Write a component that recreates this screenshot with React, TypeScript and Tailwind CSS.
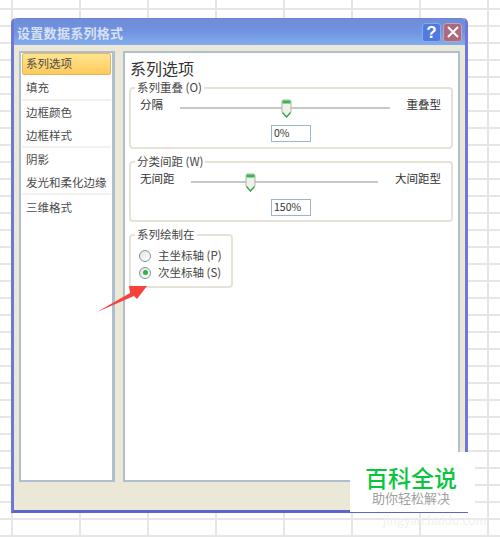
const font = { fontFamily: '"Noto Sans CJK SC", "Liberation Sans", sans-serif' };

const NavItem = ({ label, className }: { label: string; className: string }) => (
  <div className={`mx-px flex items-center whitespace-nowrap text-[11.5px] leading-none text-[#4a4a4a] ${className}`}>
    {label}
  </div>
);

const Thumb = () => (
  <svg width="11" height="20" viewBox="0 0 11 20" className="shrink-0">
    <path d="M1 2.5 L2 1 H9 L10 2.5 V13 L5.5 18.5 L1 13 Z" fill="#f1f1ec" stroke="#a9b5ab" />
    <rect x="1.5" y="1.5" width="8" height="3" fill="#35b84a" />
    <path d="M1.5 13.5 L5.5 18 L9.5 13.5" stroke="#3aa24a" strokeWidth="1.3" fill="none" />
  </svg>
);

const Group = ({ title, children, className }: { title: string; children: React.ReactNode; className: string }) => (
  <div className={`relative rounded-[4px] border-2 border-[#e5e3d5] ${className}`}>
    <span className="absolute left-[4px] top-[-9px] whitespace-nowrap bg-white px-[2px] text-[11.5px] leading-[14px] text-[#444]">{title}</span>
    {children}
  </div>
);

const SliderRow = ({
  left,
  right,
  value,
  trackClass,
  thumbClass,
}: {
  left: string;
  right: string;
  value: string;
  trackClass: string;
  thumbClass: string;
}) => (
  <>
    <div className="flex h-[33px] items-start pl-[9px] pr-[10px] pt-[5px] text-[11.5px] leading-[14px] text-[#333]">
      <span>{left}</span>
      <div className={`relative mt-px flex h-[20px] items-center ${trackClass}`}>
        <div className="h-[2px] w-full bg-[#c8c8c0]" />
        <div className={`absolute top-[1px] ${thumbClass}`}>
          <Thumb />
        </div>
      </div>
      <span className="ml-auto">{right}</span>
    </div>
    <div className="ml-[140px] flex h-[17px] w-[40px] items-center border border-[#9db4cf] bg-white pl-[2px] text-[10.5px] leading-none text-[#333]">
      {value}
    </div>
  </>
);

const Radio = ({ label, checked }: { label: string; checked?: boolean }) => (
  <div className="flex h-[17px] items-center gap-[7px] pl-[8px] text-[11.5px] leading-none text-[#444]">
    <span className="flex h-[12px] w-[12px] items-center justify-center rounded-full border border-[#7d93ab] bg-gradient-to-br from-[#e4e4dc] to-white">
      {checked && <span className="h-[5px] w-[5px] rounded-full bg-[#2fb53f]" />}
    </span>
    {label}
  </div>
);

export default function App() {
  return (
    <div className="relative h-[537px] w-[500px] overflow-hidden bg-white pl-[11px] pt-[18px]" style={font}>
      <div className="absolute inset-0 bg-[linear-gradient(to_right,#e6e6e6_2px,transparent_2px),linear-gradient(to_bottom,#e6e6e6_2px,transparent_2px)] bg-[size:68px_17px] bg-[position:11px_8px]" />

      <div className="relative flex h-[495px] w-[457px] flex-col rounded-t-[5px] border-x-[3px] border-b-[3px] border-x-[#6f78d8] border-b-[#5c64c8] bg-[#ebe8d8]">
        <div className="flex h-[27px] shrink-0 items-center rounded-t-[4px] border-t border-[#6c84d8] bg-gradient-to-b from-[#6f8cd8] via-[#7294e0] to-[#83adee] pl-[3px] pr-[3px]">
          <span className="text-[13px] font-bold leading-none tracking-[0.3px] text-[#d8e2f4]">设置数据系列格式</span>
          <div className="ml-auto flex gap-[2px]">
            <div className="flex h-[19px] w-[19px] items-center justify-center rounded-[3px] border border-[#8fa8e8] bg-[#4f7ae0] text-[17px] font-bold leading-none text-white" style={{ fontFamily: '"Liberation Sans", sans-serif' }}>
              ?
            </div>
            <div className="flex h-[19px] w-[19px] items-center justify-center rounded-[3px] border border-[#c9a0b0] bg-[#ac6a80]">
              <svg width="12" height="12" viewBox="0 0 12 12">
                <path d="M1 1 L11 11 M11 1 L1 11" stroke="#fff" strokeWidth="2" />
              </svg>
            </div>
          </div>
        </div>

        <div className="flex gap-[8px] pl-[5px] pt-[6px]">
          <div className="flex h-[431px] w-[96px] flex-col border-2 border-r-[3px] border-[#aebfd2] bg-white">
            <NavItem label="系列选项" className="mb-px h-[22px] rounded-[2px] border border-[#e3b65c] bg-gradient-to-b from-[#ffe58f] to-[#ffc95c] pl-[3px]" />
            <NavItem label="填充" className="h-[25px] border-b-2 border-b-[#f1f1ee] pl-[4px]" />
            <NavItem label="边框颜色" className="h-[24px] pl-[4px]" />
            <NavItem label="边框样式" className="h-[23px] border-b-2 border-b-[#f1f1ee] pl-[4px]" />
            <NavItem label="阴影" className="h-[24px] pl-[4px]" />
            <NavItem label="发光和柔化边缘" className="h-[23px] border-b-2 border-b-[#f1f1ee] pl-[4px]" />
            <NavItem label="三维格式" className="h-[25px] pl-[4px]" />
          </div>

          <div className="h-[431px] w-[337px] border-2 border-[#aebfd2] bg-white pl-[4px] pr-[5px]">
            <div className="flex h-[30px] items-center pl-px text-[16px] leading-none text-[#333]">系列选项</div>
            <Group title="系列重叠 (O)" className="mt-[4px] h-[62px] pt-[3px]">
              <SliderRow left="分隔" right="重叠型" value="0%" trackClass="ml-[17px] w-[210px]" thumbClass="left-[101px]" />
            </Group>
            <Group title="分类间距 (W)" className="mt-[12px] h-[61px] pt-[3px]">
              <SliderRow left="无间距" right="大间距型" value="150%" trackClass="ml-[16px] w-[187px]" thumbClass="left-[54px]" />
            </Group>
            <Group title="系列绘制在" className="mt-[12px] h-[54px] w-[104px] pt-[11px]">
              <Radio label="主坐标轴 (P)" />
              <Radio label="次坐标轴 (S)" checked />
            </Group>
          </div>
        </div>
      </div>

      <svg className="absolute left-0 top-0" width="500" height="537" viewBox="0 0 500 537">
        <path d="M97 312 L130 293 L129 286 L147 286 L137 299 L134 296 Z" fill="#f4433c" />
      </svg>

      <div className="absolute left-[350px] top-[452px] flex h-[60px] w-[125px] flex-col items-start bg-white pl-[15px] pt-[12px]">
        <span className="text-[23px] font-medium leading-[26px] text-[#0ac63e]">百科全说</span>
        <span className="ml-[7px] text-[13px] leading-[16px] text-[#a0a0a0]">助你轻松解决</span>
      </div>
      <span className="absolute left-[383px] top-[513px] text-[12px] leading-[14px] text-[#f0f0f0]">jingyan.baidu.com</span>
    </div>
  );
}
